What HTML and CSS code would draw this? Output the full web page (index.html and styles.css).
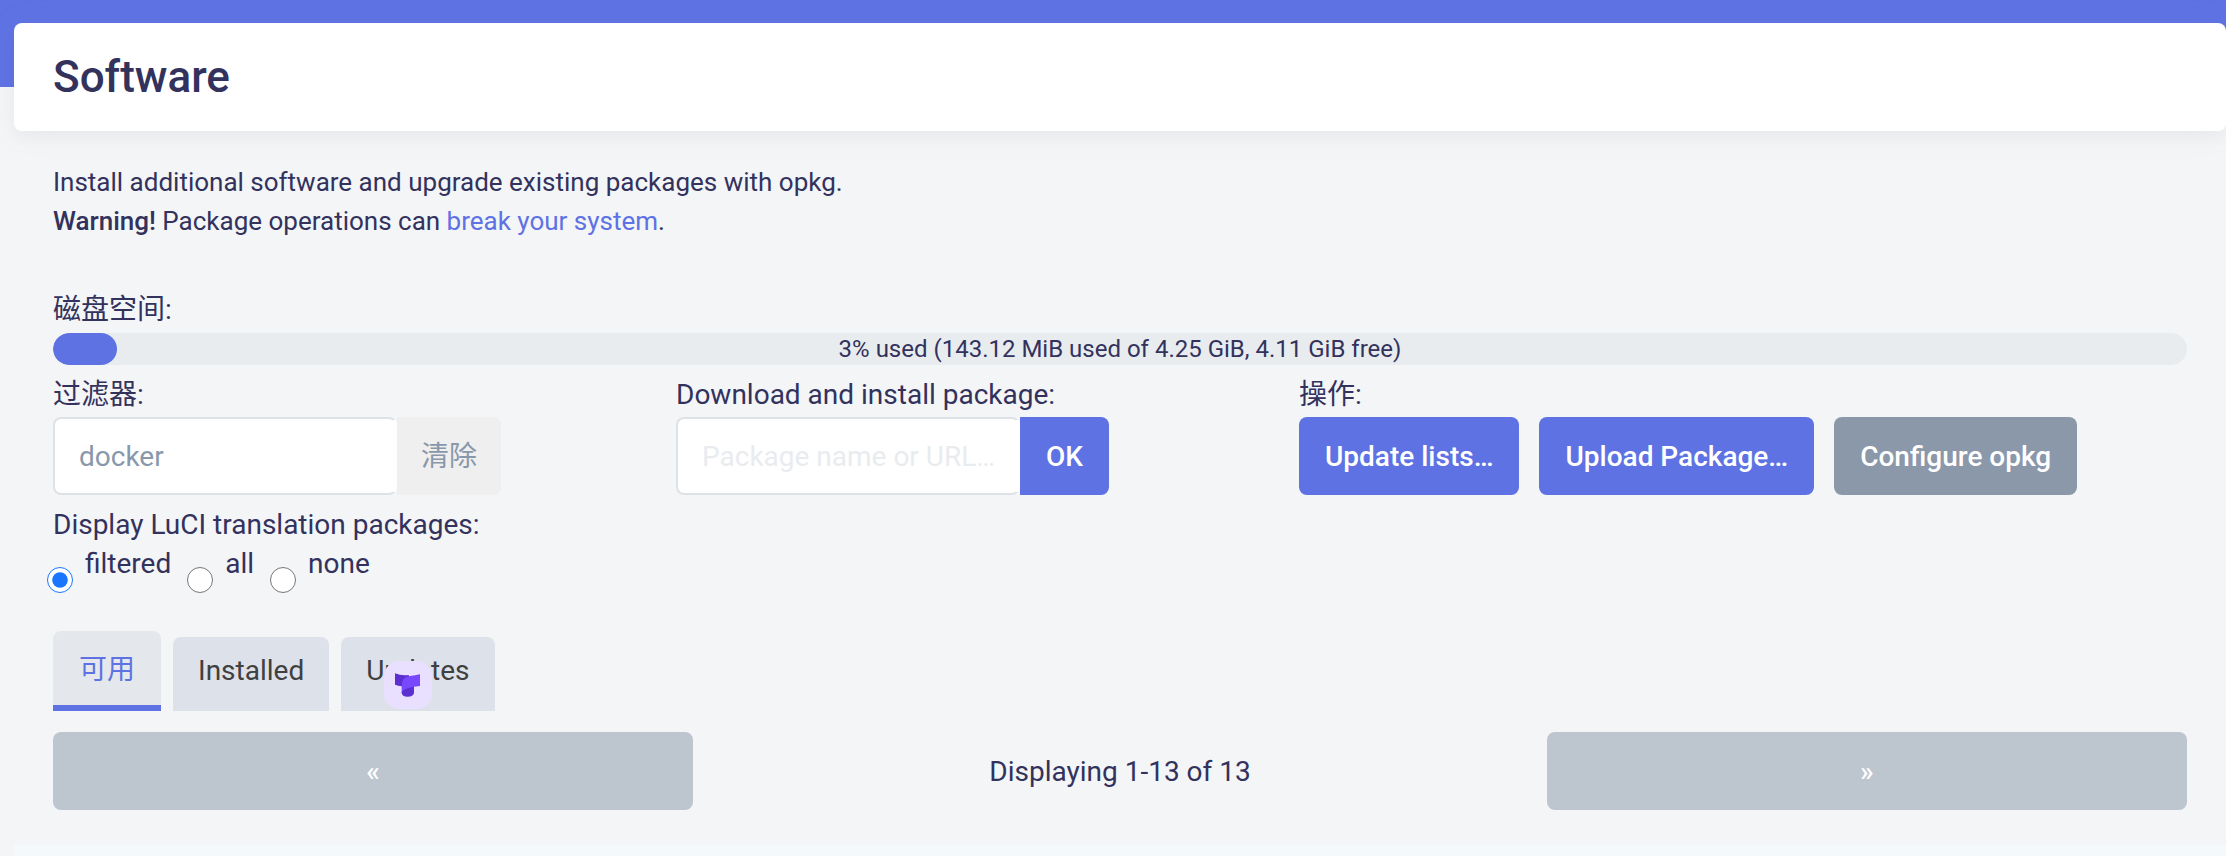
FILE: index.html
```html
<!DOCTYPE html>
<html lang="zh-CN">
<head>
<meta charset="utf-8">
<meta name="viewport" content="width=device-width, initial-scale=1">
<title>Software</title>
<link rel="stylesheet" href="styles.css">
</head>
<body>
<main class="page">
  <h1 class="title-card">Software</h1>
  <div class="content">
    <p class="intro">Install additional software and upgrade existing packages with opkg.<br>
      <strong>Warning!</strong> Package operations can <a href="#break">break your system</a>.</p>

    <section class="disk">
      <div class="label" id="disk-label">磁盘空间:</div>
      <div class="meter" role="progressbar" aria-labelledby="disk-label" aria-valuenow="3" aria-valuemin="0" aria-valuemax="100">
        <div class="meter-fill" style="width: 3%"></div>
        <span class="meter-text">3% used (143.12 MiB used of 4.25 GiB, 4.11 GiB free)</span>
      </div>
    </section>

    <section class="controls">
      <div class="control">
        <label class="label" for="filter">过滤器:</label>
        <div class="joined">
          <input class="field" id="filter" type="text" value="docker">
          <button class="btn btn-clear" type="button">清除</button>
        </div>
      </div>
      <div class="control">
        <label class="label" for="install">Download and install package:</label>
        <div class="joined">
          <input class="field" id="install" type="text" placeholder="Package name or URL…">
          <button class="btn btn-primary" type="button">OK</button>
        </div>
      </div>
      <div class="control control-actions">
        <div class="label">操作:</div>
        <div class="actions">
          <button class="btn btn-primary" type="button">Update lists…</button>
          <button class="btn btn-primary" type="button">Upload Package…</button>
          <button class="btn btn-neutral" type="button">Configure opkg</button>
        </div>
      </div>
    </section>

    <fieldset class="translations">
      <legend class="label">Display LuCI translation packages:</legend>
      <div class="radios">
        <input class="radio" type="radio" name="i18n" id="r-filtered" checked><label for="r-filtered">filtered</label>
        <input class="radio" type="radio" name="i18n" id="r-all"><label for="r-all">all</label>
        <input class="radio" type="radio" name="i18n" id="r-none"><label for="r-none">none</label>
      </div>
    </fieldset>

    <nav class="tabs">
      <a class="tab tab-active" href="#available">可用</a>
      <a class="tab" href="#installed">Installed</a>
      <a class="tab" href="#updates">Updates
        <svg class="badge" viewBox="0 0 144 144" aria-hidden="true">
          <rect width="144" height="144" rx="46" fill="#e9e0ff"/>
          <path d="M33 37 Q52 45 74 42 L80 60 L53 76 Q43 75 33 71Z" fill="#5b2fd0"/>
          <path d="M53 76 Q52 48 78 45 Q94 44 108 40 V75 L90 77 V96 L53 96Z" fill="#7848ff"/>
          <path d="M53 94 Q59 82 90 77 V96 Q88 107 71 107 Q54 107 53 96Z" fill="#5b2fd0"/>
        </svg>
      </a>
    </nav>

    <div class="pager">
      <button class="btn btn-page" type="button" aria-label="Previous page">«</button>
      <div class="pager-text">Displaying 1-13 of 13</div>
      <button class="btn btn-page" type="button" aria-label="Next page">»</button>
    </div>
  </div>
  <div class="table-top"></div>
</main>
</body>
</html>
```
FILE: styles.css
```css
* { box-sizing: border-box; }

body {
  margin: 0;
  color: #32325d;
  background: #f4f5f7 linear-gradient(#5e72e4, #5e72e4) top / 100% 87px no-repeat;
  font-family: Roboto, "Noto Sans CJK SC", sans-serif;
  font-size: 28px;
  line-height: 39px;
}

.page { padding: 23px 0 0 14px; }

.title-card {
  margin: 0;
  padding: 24px 39px;
  border-radius: 8px;
  background: #fff;
  box-shadow: 0 0 32px rgba(136, 152, 170, 0.08), 0 8px 16px rgba(0, 0, 0, 0.03);
  font-size: 44px;
  font-weight: 500;
  line-height: 60px;
}

.content { padding: 32px 39px 35px; }

.intro { margin: 0; font-size: 26px; }
.intro strong { font-weight: 500; }
.intro a { color: #5e72e4; text-decoration: none; }

.label { display: block; padding: 0; }

.disk { margin-top: 49px; }
.disk .label { padding-bottom: 4px; }
.meter {
  position: relative;
  height: 32px;
  border-radius: 16px;
  background: #e9ecef;
  overflow: hidden;
}
.meter-fill { height: 100%; border-radius: 16px; background: #5e72e4; }
.meter-text {
  position: absolute;
  inset: 0;
  font-size: 24px;
  line-height: 32px;
  text-align: center;
}

.controls {
  display: grid;
  grid-template-columns: 623fr 623fr 888fr;
  margin-top: 10px;
}
.control .label { padding-bottom: 3px; }
.joined { display: flex; }
.actions { display: flex; gap: 20px; }

.field {
  width: 344px;
  height: 78px;
  padding: 0 24px;
  border: 2px solid #dee2e6;
  border-right-color: #fff;
  border-radius: 8px;
  background: #fff;
  color: #8898aa;
  font: inherit;
}
.field::placeholder { color: #e9ecef; opacity: 1; }

.btn {
  height: 78px;
  padding: 0 26px;
  border: 0;
  border-radius: 8px;
  color: #fff;
  font: inherit;
  font-weight: 500;
  white-space: nowrap;
}
.joined .btn { border-radius: 0 8px 8px 0; }
.btn-primary { background: #5e72e4; }
.btn-neutral { background: #8a98aa; }
.joined .btn-clear { padding: 0 24px; background: #efefef; color: #8898aa; font-weight: 400; }

.translations { margin: 10px 0 0; padding: 0; border: 0; }
.radios { display: flex; align-items: flex-start; margin-left: -6px; }
.radios label { margin: 0 16px 0 12px; }
.radio { width: 26px; height: 26px; margin: 23px 0 0; accent-color: #1a75ff; }

.tabs { display: flex; align-items: flex-end; gap: 12px; margin-top: 38px; }
.tab {
  position: relative;
  height: 74px;
  padding: 14px 25px;
  border-radius: 8px 8px 0 0;
  background: #dde2ea;
  color: #404040;
  text-decoration: none;
}
.tab-active {
  height: 80px;
  padding: 19px 26px 0;
  border-bottom: 6px solid #5e72e4;
  background: #e4e8ec;
  color: #5e72e4;
}
.badge { position: absolute; left: 43px; top: 24px; width: 48px; height: 48px; }

.pager { display: flex; align-items: center; justify-content: space-between; margin-top: 21px; }
.btn-page { width: 30%; background: #bdc5cf; }

.table-top { height: 11px; background: #f4f9fc; }
```
